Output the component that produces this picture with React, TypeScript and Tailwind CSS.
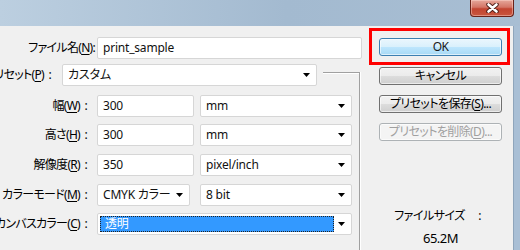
import type { ReactNode } from 'react'

function U({ children }: { children: ReactNode }) {
  return <span className="underline underline-offset-[2px]">{children}</span>
}

function Colon() {
  return <span className="inline-block w-[12px] text-center tracking-normal">:</span>
}

function Label({ className, children }: { className: string; children: ReactNode }) {
  return (
    <div className={`flex shrink-0 items-center justify-end whitespace-nowrap tracking-[-0.7px] ${className}`}>
      <span>{children}</span>
    </div>
  )
}

function Arrow() {
  return (
    <svg width="7" height="4" viewBox="0 0 7 4" className="shrink-0">
      <path d="M0 0h7L3.5 4z" fill="#000" />
    </svg>
  )
}

function TextBox({ className, value }: { className: string; value: string }) {
  return (
    <div
      className={`flex h-[22px] shrink-0 items-center rounded-[2px] border border-[#d6d6d6] bg-white pl-[5px] tracking-[-0.2px] text-[#111] ${className}`}
    >
      {value}
    </div>
  )
}

function Select({ className, children }: { className: string; children: ReactNode }) {
  return (
    <div
      className={`flex h-[22px] shrink-0 items-center justify-between rounded-[2px] border border-[#d6d6d6] bg-white pl-[5px] pr-[6px] tracking-[-0.2px] text-[#111] ${className}`}
    >
      <div className="flex min-w-0 flex-1 items-center">{children}</div>
      <Arrow />
    </div>
  )
}

function Button({
  children,
  primary = false,
  disabled = false,
}: {
  children: ReactNode
  primary?: boolean
  disabled?: boolean
}) {
  const look = primary
    ? 'border-[#3c7fb1] bg-[linear-gradient(#eaf6fd,#d9f0fc_50%,#bee6fd_50%,#a7d9f5)] text-[#1a1a1a]'
    : disabled
      ? 'border-[#adb2b5] bg-[#f4f4f4] text-[#a0a0a0]'
      : 'border-[#707070] bg-[linear-gradient(#f2f2f2,#ebebeb_50%,#dddddd_50%,#cfcfcf)] text-black'
  return (
    <div
      className={`flex h-[18px] w-[123px] items-center justify-center rounded-[3px] border tracking-[-0.6px] shadow-[inset_0_0_0_1px_rgba(255,255,255,0.6)] ${look}`}
    >
      {children}
    </div>
  )
}

export default function App() {
  return (
    <div className="h-[250px] w-[520px] overflow-hidden bg-[#f0f0f0] font-['Noto_Sans','Noto_Sans_CJK_JP',sans-serif] text-[12px] leading-none text-black [font-feature-settings:'palt']">
      {/* title bar */}
      <div className="flex h-[26px] justify-end bg-[linear-gradient(to_right,#bccfe0,#a3bad0_55%,#a8bed3)]">
        <div className="mr-[6px] flex h-[17px] w-[44px] items-center justify-center rounded-b-[4px] border border-t-0 border-[#6a2219] bg-[linear-gradient(#e6a79b,#d47566_45%,#c24431_55%,#c9563f)] shadow-[inset_0_0_0_1px_rgba(255,220,210,0.45)]">
          <svg width="13" height="10" viewBox="0 0 13 10">
            <path d="M2.5 1.5 10.5 8.5M10.5 1.5 2.5 8.5" stroke="#4a1a14" strokeWidth="4.4" strokeLinecap="round" />
            <path d="M2.5 1.5 10.5 8.5M10.5 1.5 2.5 8.5" stroke="#fff" strokeWidth="2.6" strokeLinecap="round" />
          </svg>
        </div>
      </div>

      <div className="flex h-[224px]">
        {/* form */}
        <div className="flex w-[362px] shrink-0 flex-col pt-[11px]">
          <div className="flex h-[22px]">
            <Label className="w-[95px]">
              ファイル名(<U>N</U>):
            </Label>
            <TextBox className="ml-[2px] w-[265px]" value="print_sample" />
          </div>

          <div className="mt-[5px] flex h-[22px]">
            <Label className="w-[56px]">
              プリセット(<U>P</U>)<Colon />
            </Label>
            <Select className="ml-[6px] w-[255px]">カスタム</Select>
            <div className="ml-[6px] mt-[8px] w-[37px] border-r border-t border-[#a0a0a0] shadow-[inset_0_1px_0_#fff,1px_0_0_#fff]" />
          </div>

          <div className="flex w-[360px] flex-1 flex-col border-r border-[#a0a0a0] pt-[9px] shadow-[1px_0_0_#fff]">
            <div className="flex h-[22px]">
              <Label className="w-[92px]">
                幅(<U>W</U>)<Colon />
              </Label>
              <TextBox className="ml-[5px] w-[97px]" value="300" />
              <Select className="ml-[6px] w-[152px]">mm</Select>
            </div>
            <div className="mt-[7px] flex h-[22px]">
              <Label className="w-[92px]">
                高さ(<U>H</U>)<Colon />
              </Label>
              <TextBox className="ml-[5px] w-[97px]" value="300" />
              <Select className="ml-[6px] w-[152px]">mm</Select>
            </div>
            <div className="mt-[8px] flex h-[22px]">
              <Label className="w-[92px]">
                解像度(<U>R</U>)<Colon />
              </Label>
              <TextBox className="ml-[5px] w-[97px]" value="350" />
              <Select className="ml-[6px] w-[152px]">pixel/inch</Select>
            </div>
            <div className="mt-[8px] flex h-[22px]">
              <Label className="w-[92px]">
                カラーモード(<U>M</U>)<Colon />
              </Label>
              <Select className="ml-[5px] w-[93px]">CMYK カラー</Select>
              <Select className="ml-[10px] w-[152px]">8 bit</Select>
            </div>
            <div className="mt-[7px] flex h-[22px]">
              <Label className="w-[92px]">
                カンバスカラー(<U>C</U>)<Colon />
              </Label>
              <Select className="ml-[5px] w-[255px] !pl-[2px]">
                <div className="flex h-[16px] w-[234px] items-center border border-dotted border-[#222] bg-[#3399ff] pl-[4px] text-white">
                  透明
                </div>
              </Select>
            </div>
          </div>
        </div>

        {/* buttons */}
        <div className="flex w-[151px] shrink-0 flex-col">
          <div className="ml-[7px] mt-[2px] h-[37px] w-[141px] border-[3px] border-[#ff0000] pl-[7px] pt-[7px]">
            <Button primary>OK</Button>
          </div>
          <div className="ml-[17px] mt-[2px] flex flex-col gap-[10px]">
            <Button>キャンセル</Button>
            <Button>
              プリセットを保存(<U>S</U>)...
            </Button>
            <Button disabled>
              プリセットを削除(<U>D</U>)...
            </Button>
          </div>
          <div className="mt-[69px] flex flex-col items-center gap-[10px] tracking-[-0.5px]">
            <span className="whitespace-nowrap">
              ファイルサイズ<span className="inline-block w-[16px] text-right">:</span>
            </span>
            <span className="ml-[6px] text-[13px]">65.2M</span>
          </div>
        </div>

        {/* window frame */}
        <div className="w-[7px] shrink-0 border-l border-[#8fa5bb] bg-[#a9bfd5]" />
      </div>
    </div>
  )
}
